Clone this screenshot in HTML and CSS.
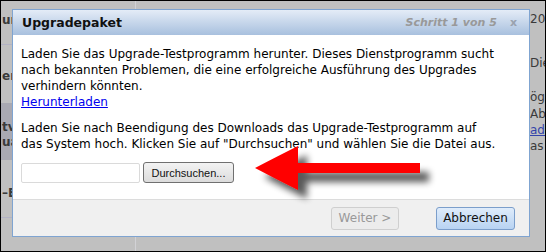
FILE: index.html
```html
<!DOCTYPE html>
<html lang="de">
<head>
<meta charset="UTF-8" />
<meta name="viewport" content="width=device-width, initial-scale=1" />
<title>Upgradepaket</title>
<link rel="stylesheet" href="styles.css">
</head>
<body>

<div class="screen">
  <div class="page">
    <div class="page-left">
      <div class="row row-1"><span>ur</span></div>
      <div class="row row-2"><span>en</span></div>
      <div class="row row-band"><span>tv</span><span>ua</span></div>
      <div class="row row-4"><span>&ndash;E</span></div>
    </div>
    <div class="page-main"></div>
    <div class="page-right">
      <div class="line l-1">20</div>
      <div class="line l-2">Die</div>
      <div class="line l-3">ögl</div>
      <div class="line l-4">Ab</div>
      <div class="line l-5"><a href="#">ade</a></div>
      <div class="line l-6">as</div>
    </div>
  </div>

  <div class="dialog">
    <div class="dialog-head">
      <span class="dialog-title">Upgradepaket</span>
      <span class="dialog-step">Schritt 1 von 5</span>
      <span class="dialog-close">x</span>
    </div>
    <div class="dialog-body">
      <p class="para">Laden Sie das Upgrade-Testprogramm herunter. Dieses Dienstprogramm sucht<br>
      nach bekannten Problemen, die eine erfolgreiche Ausführung des Upgrades<br>
      verhindern könnten.<br>
      <a href="#" class="link">Herunterladen</a></p>
      <p class="para">Laden Sie nach Beendigung des Downloads das Upgrade-Testprogramm auf<br>
      das System hoch. Klicken Sie auf "Durchsuchen" und wählen Sie die Datei aus.</p>
      <div class="file-row">
        <input type="text" class="file-input" />
        <button class="file-btn">Durchsuchen...</button>
      </div>
    </div>
    <div class="dialog-foot">
      <button class="btn btn-disabled" disabled>Weiter &gt;</button>
      <button class="btn btn-primary">Abbrechen</button>
    </div>
  </div>

  <svg class="arrow" width="200" height="80" viewBox="0 0 200 80">
    <defs>
      <filter id="shadow" x="-20%" y="-30%" width="150%" height="180%">
        <feGaussianBlur in="SourceAlpha" stdDeviation="3.5" />
        <feOffset dx="9" dy="9" result="blur" />
        <feComponentTransfer><feFuncA type="linear" slope="0.65" /></feComponentTransfer>
        <feMerge><feMergeNode /><feMergeNode in="SourceGraphic" /></feMerge>
      </filter>
    </defs>
    <path d="M15,33 Q38,21 58,11 L58,28 L180,28 L180,38 L58,38 L58,55 Q38,45 15,33 Z" fill="#ff0000" filter="url(#shadow)" />
  </svg>
</div>

</body>
</html>
```

FILE: styles.css
```css
body {
  margin: 0;
  font-family: "DejaVu Sans", Verdana, sans-serif;
}
.screen {
  position: relative;
  width: 546px;
  height: 252px;
  box-sizing: border-box;
  border: 1px solid #000;
  background: #c0c0c0;
  overflow: hidden;
}
.page {
  display: flex;
  height: 100%;
  font-size: 12px;
  color: #3a3a3a;
}
.page-left {
  width: 134px;
  border-right: 1px solid #d2d2d6;
  display: flex;
  flex-direction: column;
}
.row {
  border-bottom: 1px solid #b2b2c4;
  font-weight: bold;
  display: flex;
  flex-direction: column;
  padding-left: 1px;
  box-sizing: border-box;
}
.row-1 {
  height: 44px;
  padding-top: 12px;
}
.row-2 {
  height: 58px;
  padding-top: 24px;
  border-bottom: none;
}
.row-band {
  height: 57px;
  background: #a9a9b2;
  padding-top: 17px;
  line-height: 15px;
  border-bottom: none;
}
.row-4 {
  height: 58px;
  padding-top: 26px;
}
.page-main {
  flex: 1;
}
.page-right {
  width: 15px;
  padding-top: 10px;
  line-height: 16px;
  overflow: hidden;
}
.line {
  white-space: nowrap;
}
.l-2 { margin-top: 28px; }
.l-3 { margin-top: 18px; }
.l-4 { margin-top: 1px; }
.l-5 a { color: #3344aa; }

.dialog {
  position: absolute;
  left: 11px;
  top: 8px;
  width: 518px;
  height: 228px;
  box-sizing: border-box;
  border: 1px solid #7fa4d1;
  background: #fff;
  display: flex;
  flex-direction: column;
}
.dialog-head {
  height: 25px;
  flex: none;
  display: flex;
  align-items: center;
  padding: 0 12px 0 9px;
  background: linear-gradient(#e4ecf7, #a8c0de);
}
.dialog-title {
  font-size: 12.5px;
  font-weight: bold;
  color: #111;
  flex: 1;
}
.dialog-step {
  font-size: 11px;
  font-weight: bold;
  font-style: italic;
  color: #999;
  margin-right: 13px;
}
.dialog-close {
  font-size: 11px;
  font-weight: bold;
  color: #9aa2ae;
}
.dialog-body {
  flex: 1;
  padding: 11px 8px 0;
  font-size: 12px;
  line-height: 16px;
  color: #000;
}
.para {
  margin: 0 0 10px;
  white-space: nowrap;
}
.link {
  color: #0000ee;
}
.file-row {
  display: flex;
  align-items: center;
  gap: 3px;
  margin-top: 6px;
}
.file-input {
  width: 119px;
  height: 20px;
  box-sizing: border-box;
  border: 1px solid #dadada;
  border-radius: 2px;
  margin: 0;
  padding: 0;
}
.file-btn {
  width: 91px;
  height: 21px;
  box-sizing: border-box;
  border: 1px solid #707070;
  border-radius: 3px;
  background: linear-gradient(#f3f3f3, #dcdcdc);
  font-family: "Liberation Sans", Arial, sans-serif;
  font-size: 11px;
  color: #111;
  padding: 0;
}
.dialog-foot {
  height: 37px;
  flex: none;
  box-sizing: border-box;
  border-top: 1px solid #dcdcdc;
  background: #f0f0f0;
  display: flex;
  justify-content: flex-end;
  align-items: center;
  gap: 37px;
  padding-right: 14px;
}
.btn {
  height: 23px;
  box-sizing: border-box;
  border-radius: 3px;
  font-family: "DejaVu Sans", Verdana, sans-serif;
  font-size: 12px;
  padding: 0;
}
.btn-disabled {
  width: 68px;
  border: 1px solid #cfcfcf;
  background: #ececec;
  color: #999;
}
.btn-primary {
  width: 79px;
  border: 1px solid #7b9ecb;
  background: linear-gradient(#dfecfb, #b8d3f2);
  color: #111;
}
.arrow {
  position: absolute;
  left: 239px;
  top: 134px;
}
```
